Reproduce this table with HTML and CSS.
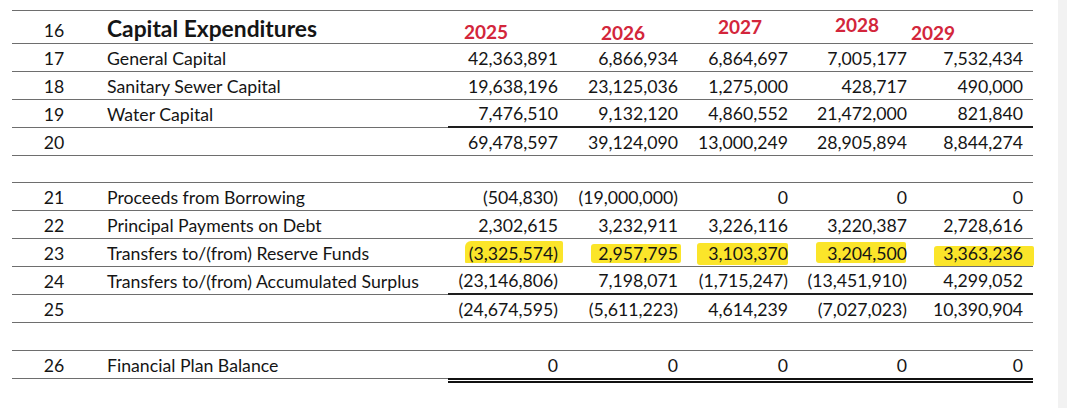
FILE: index.html
```html
<!DOCTYPE html>
<html>
<head>
<meta charset="utf-8">
<link rel="stylesheet" href="styles.css">
</head>
<body>
<div class="sheet">
  <div class="row head">
    <div class="c n">16</div>
    <div class="c l">Capital Expenditures</div>
    <div class="years">
      <span class="yr y25">2025</span>
      <span class="yr y26">2026</span>
      <span class="yr y27">2027</span>
      <span class="yr y28">2028</span>
      <span class="yr y29">2029</span>
    </div>
  </div>
  <div class="row">
    <div class="c n">17</div><div class="c l">General Capital</div>
    <div class="c v">42,363,891</div><div class="c v">6,866,934</div><div class="c v">6,864,697</div><div class="c v">7,005,177</div><div class="c v">7,532,434</div>
  </div>
  <div class="row">
    <div class="c n">18</div><div class="c l">Sanitary Sewer Capital</div>
    <div class="c v">19,638,196</div><div class="c v">23,125,036</div><div class="c v">1,275,000</div><div class="c v">428,717</div><div class="c v">490,000</div>
  </div>
  <div class="row sub">
    <div class="c n">19</div><div class="c l">Water Capital</div>
    <div class="c v">7,476,510</div><div class="c v">9,132,120</div><div class="c v">4,860,552</div><div class="c v">21,472,000</div><div class="c v">821,840</div>
  </div>
  <div class="row">
    <div class="c n">20</div><div class="c l"></div>
    <div class="c v">69,478,597</div><div class="c v">39,124,090</div><div class="c v">13,000,249</div><div class="c v">28,905,894</div><div class="c v">8,844,274</div>
  </div>
  <div class="row">
    <div class="c n"></div><div class="c l"></div>
    <div class="c v"></div><div class="c v"></div><div class="c v"></div><div class="c v"></div><div class="c v"></div>
  </div>
  <div class="row">
    <div class="c n">21</div><div class="c l">Proceeds from Borrowing</div>
    <div class="c v">(504,830)</div><div class="c v">(19,000,000)</div><div class="c v">0</div><div class="c v">0</div><div class="c v">0</div>
  </div>
  <div class="row">
    <div class="c n">22</div><div class="c l">Principal Payments on Debt</div>
    <div class="c v">2,302,615</div><div class="c v">3,232,911</div><div class="c v">3,226,116</div><div class="c v">3,220,387</div><div class="c v">2,728,616</div>
  </div>
  <div class="row">
    <div class="c n">23</div><div class="c l">Transfers to/(from) Reserve Funds</div>
    <div class="c v"><span class="hl h1">(3,325,574)</span></div>
    <div class="c v"><span class="hl h2">2,957,795</span></div>
    <div class="c v"><span class="hl h3">3,103,370</span></div>
    <div class="c v"><span class="hl h4">3,204,500</span></div>
    <div class="c v"><span class="hl h5">3,363,236</span></div>
  </div>
  <div class="row sub">
    <div class="c n">24</div><div class="c l">Transfers to/(from) Accumulated Surplus</div>
    <div class="c v">(23,146,806)</div><div class="c v">7,198,071</div><div class="c v">(1,715,247)</div><div class="c v">(13,451,910)</div><div class="c v">4,299,052</div>
  </div>
  <div class="row">
    <div class="c n">25</div><div class="c l"></div>
    <div class="c v">(24,674,595)</div><div class="c v">(5,611,223)</div><div class="c v">4,614,239</div><div class="c v">(7,027,023)</div><div class="c v">10,390,904</div>
  </div>
  <div class="row">
    <div class="c n"></div><div class="c l"></div>
    <div class="c v"></div><div class="c v"></div><div class="c v"></div><div class="c v"></div><div class="c v"></div>
  </div>
  <div class="row final">
    <div class="c n">26</div><div class="c l">Financial Plan Balance</div>
    <div class="c v">0</div><div class="c v">0</div><div class="c v">0</div><div class="c v">0</div><div class="c v">0</div>
  </div>
</div>
<div class="track"></div>
</body>
</html>
```
FILE: styles.css
```css
* { box-sizing: border-box; }
html { background: #fff; }
body {
  margin: 0;
  padding: 0;
  display: flex;
  height: 408px;
  overflow: hidden;
  font-family: Lato, "Open Sans", sans-serif;
  color: #151515;
}
.sheet {
  align-self: flex-start;
  margin: 10px 0 0 12px;
  width: 1021px;
  border-top: 1px solid #6e6e6e;
}
.track {
  margin-left: auto;
  width: 9px;
  background: #f2f2f2;
}
.row {
  display: grid;
  grid-template-columns: 84px 352px 120px 120px 110px 119px 116px;
  height: 27.9px;
}
.c {
  display: flex;
  align-items: flex-end;
  padding-bottom: 2px;
  border-bottom: 1px solid #6e6e6e;
  font-size: 17.7px;
  line-height: 20px;
  white-space: nowrap;
}
.n { justify-content: center; }
.l { padding-left: 11px; }
.v { justify-content: flex-end; padding-right: 10px; }

.head { height: 33px; }
.head .l {
  font-size: 22.8px;
  line-height: 22px;
  font-weight: 700;
  padding-bottom: 4px;
}
.years {
  grid-column: 3 / span 5;
  display: flex;
  align-items: flex-start;
  border-bottom: 1px solid #6e6e6e;
}
.yr {
  width: 46px;
  color: #d3263b;
  font-size: 19px;
  line-height: 19px;
  font-weight: 700;
}
.y25 { margin: 11px 0 0 16px; }
.y26 { margin: 12px 0 0 91px; }
.y27 { margin: 6px 0 0 71px; }
.y28 { margin: 4px 0 0 71px; }
.y29 { margin: 12px 0 0 30px; }

.sub .v { border-bottom: 2px solid #1e1e1e; }

.final { height: 31.9px; align-items: start; }
.final .n, .final .l { height: 27.9px; }
.final .v {
  height: 31.9px;
  padding-bottom: 2px;
  border-bottom: 5px double #111;
}

.hl { position: relative; z-index: 0; }
.hl::before {
  content: "";
  position: absolute;
  z-index: -1;
  background: #fbe52a;
  border-radius: 3px 2px 2px 3px;
}
.h1::before { top: -3px; bottom: 1px; left: -4px; right: -5px; border-radius: 6px 2px 2px 1px; }
.h2::before { top: 0; bottom: 1px; left: -7px; right: -3px; }
.h3::before { top: -1px; bottom: -1px; left: -11px; right: 0; }
.h4::before { top: -2px; bottom: 1px; left: -11px; right: 1px; }
.h5::before { top: 2px; bottom: -2px; left: -9px; right: -11px; }
```
